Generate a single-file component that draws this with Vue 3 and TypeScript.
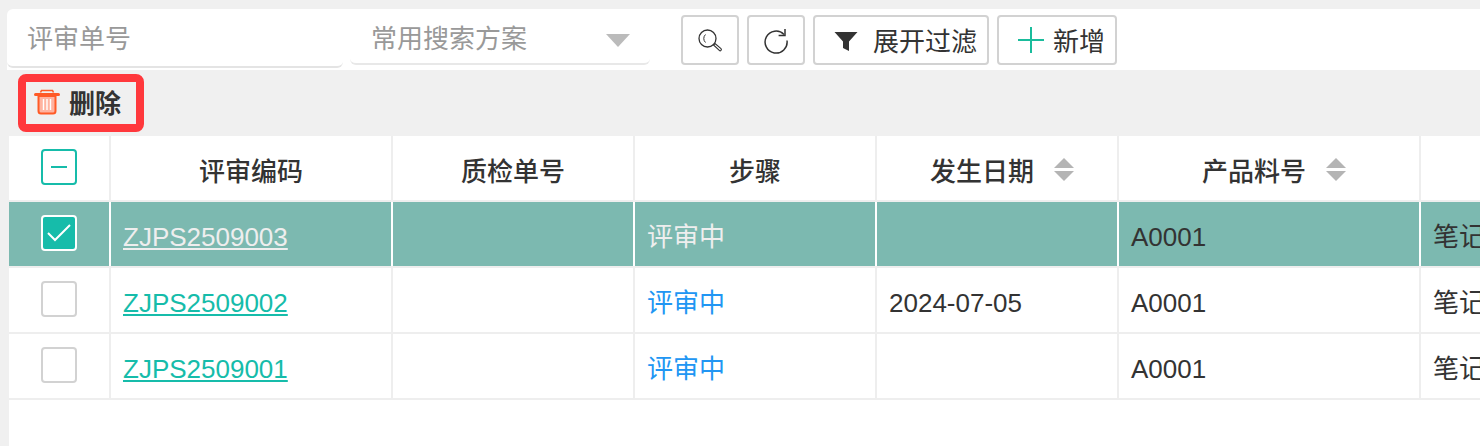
<script setup lang="ts">
interface Row {
  code: string
  step: string
  date: string
  part: string
  name: string
  state: 'checked' | 'empty'
}

const rows: Row[] = [
  { code: 'ZJPS2509003', step: '评审中', date: '', part: 'A0001', name: '笔记本', state: 'checked' },
  { code: 'ZJPS2509002', step: '评审中', date: '2024-07-05', part: 'A0001', name: '笔记本', state: 'empty' },
  { code: 'ZJPS2509001', step: '评审中', date: '', part: 'A0001', name: '笔记本', state: 'empty' },
]
</script>

<template>
  <div class="page">
    <div class="toolbar">
      <div class="search-input">评审单号</div>
      <div class="scheme-select">
        <span>常用搜索方案</span>
        <i class="caret"></i>
      </div>
      <div class="actions">
        <button type="button" class="btn btn-icon" aria-label="搜索">
          <svg width="28" height="28" viewBox="0 0 28 28" fill="none" stroke="#333" stroke-width="1.3">
            <circle cx="11.5" cy="12.5" r="8.5" />
            <path d="M9.5 8.5a5.5 5.5 0 0 0 0 8" stroke-width="1" />
            <path d="M17.5 19l1.5-1.5 6 5.2a1.1 1.1 0 0 1-1.7 1.7z" stroke-width="1.1" />
          </svg>
        </button>
        <button type="button" class="btn btn-icon" aria-label="刷新">
          <svg width="28" height="28" viewBox="0 0 28 28" fill="none" stroke="#333" stroke-width="1.5">
            <path d="M22 8.4A11 11 0 1 0 25 14.5" />
            <path d="M23 3v6.4h-6.4" />
          </svg>
        </button>
        <button type="button" class="btn btn-filter">
          <svg class="funnel" width="24" height="22" viewBox="0 0 24 22">
            <path d="M0.5 2h23L15 11.5V21l-6-3V11.5z" fill="#333" />
          </svg>
          <span class="btn-label">展开过滤</span>
        </button>
        <button type="button" class="btn btn-add">
          <svg width="28" height="28" viewBox="0 0 28 28" stroke="#1abc9c" stroke-width="2">
            <path d="M14 1v26M1 14h26" />
          </svg>
          <span class="btn-label">新增</span>
        </button>
      </div>
    </div>

    <div class="bulk-bar">
      <div class="delete-mark">
        <svg width="26" height="26" viewBox="0 0 26 26" fill="none">
          <path d="M1.500 5.500h23" stroke="#ff5a26" stroke-width="3" stroke-linecap="round" />
          <path d="M6.500 3.500l1-2h11l1 2" stroke="#ff5a26" stroke-width="1.6" />
          <path d="M4.500 7h17v15a2.500 2.500 0 0 1-2.500 2.500h-12a2.500 2.500 0 0 1-2.500-2.500z" fill="#ffb3a0" stroke="#ff5a26" stroke-width="2" />
          <path d="M9.500 10v11M13 10v11M16.500 10v11" stroke="#fff" stroke-width="1.400" />
        </svg>
        <span>删除</span>
      </div>
    </div>

    <div class="table-wrap">
      <div class="tr tr-head">
        <div class="td td-check">
          <span class="check check-half"><i></i></span>
        </div>
        <div class="td th">评审编码</div>
        <div class="td th">质检单号</div>
        <div class="td th">步骤</div>
        <div class="td th th-sort">发生日期<span class="sort"><i></i><i></i></span></div>
        <div class="td th th-sort">产品料号<span class="sort"><i></i><i></i></span></div>
        <div class="td th"></div>
      </div>
      <div
        v-for="row in rows"
        :key="row.code"
        class="tr"
        :class="{ 'tr-selected': row.state === 'checked' }"
      >
        <div class="td td-check">
          <span class="check" :class="{ 'check-on': row.state === 'checked' }">
            <svg v-if="row.state === 'checked'" width="32" height="32" viewBox="0 0 32 32" fill="none" stroke="#fff" stroke-width="2">
              <path d="M5 16l7 7L27 8" />
            </svg>
          </span>
        </div>
        <div class="td"><a class="code-link">{{ row.code }}</a></div>
        <div class="td"></div>
        <div class="td td-cjk step">{{ row.step }}</div>
        <div class="td">{{ row.date }}</div>
        <div class="td">{{ row.part }}</div>
        <div class="td td-cjk">{{ row.name }}</div>
      </div>
    </div>
  </div>
</template>

<style scoped>
.page {
  display: flex;
  flex-direction: column;
  width: 1480px;
  height: 446px;
  padding-top: 9px;
  box-sizing: border-box;
  overflow: hidden;
  background: #f0f0f0;
  font-family: "Liberation Sans", "Noto Sans CJK SC", sans-serif;
  color: #333;
}

/* top search bar */
.toolbar {
  display: flex;
  align-items: flex-start;
  height: 61px;
  margin-left: 7px;
  background: #fff;
  border-radius: 6px 0 0 0;
  flex: none;
}

.search-input {
  width: 336px;
  height: 59px;
  padding: 15px 0 0 20px;
  box-sizing: border-box;
  font-size: 26px;
  line-height: 30px;
  color: #999;
  border-bottom: 2px solid #e4e4e4;
  border-radius: 0 0 6px 6px;
  flex: none;
}

.scheme-select {
  display: flex;
  justify-content: space-between;
  width: 300px;
  height: 56px;
  margin-left: 7px;
  padding: 15px 20px 0 21px;
  box-sizing: border-box;
  font-size: 26px;
  line-height: 30px;
  color: #999;
  border-bottom: 2px solid #e8e8e8;
  border-radius: 0 0 6px 6px;
  flex: none;
}

.caret {
  width: 0;
  height: 0;
  margin-top: 10px;
  border-left: 12px solid transparent;
  border-right: 12px solid transparent;
  border-top: 13px solid #bbb;
}

.actions {
  display: flex;
  gap: 8px;
  margin: 6px 0 0 31px;
}

.btn {
  display: flex;
  align-items: center;
  height: 50px;
  padding: 0;
  background: #fff;
  border: 2px solid #d2d2d2;
  border-radius: 4px;
  box-sizing: border-box;
  font-family: inherit;
  font-size: 26px;
  color: #333;
}

.btn-icon {
  justify-content: center;
  width: 58px;
}

.btn-filter {
  width: 176px;
  padding-left: 19px;
  gap: 15px;
}

.btn-add {
  width: 120px;
  padding-left: 18px;
  gap: 8px;
}

.btn-label {
  padding-bottom: 2px;
}

.funnel {
  margin-top: 2px;
}

/* bulk actions */
.bulk-bar {
  height: 66px;
  padding-left: 18px;
  flex: none;
}

.delete-mark {
  display: flex;
  align-items: center;
  gap: 9px;
  width: 126px;
  height: 58px;
  margin-top: 4px;
  padding: 0 0 4px 8px;
  box-sizing: border-box;
  border: 8px solid #ff383c;
  border-radius: 8px;
  font-size: 26px;
  font-weight: 700;
  color: #333;
}

.delete-mark svg {
  margin-top: 2px;
}

/* table */
.table-wrap {
  flex: 1;
  margin-left: 9px;
  background: #fff;
}

.tr {
  display: grid;
  grid-template-columns: 102px 282px 242px 242px 242px 302px 1fr;
  height: 66px;
  border-bottom: 2px solid #eee;
  box-sizing: border-box;
}

.td {
  display: flex;
  align-items: center;
  padding: 7px 12px 0;
  box-sizing: border-box;
  border-right: 2px solid #eee;
  font-size: 26px;
  white-space: nowrap;
  overflow: hidden;
}

.td:last-child {
  border-right: none;
}

.td-cjk {
  padding-top: 1px;
}

.th {
  justify-content: center;
  padding: 2px 0 0;
  font-weight: 500;
}

.th-sort {
  padding-left: 10px;
}

.td-check {
  justify-content: center;
  padding: 0 0 2px;
}

.tr-selected {
  background: #7cb9b0;
}

.tr-selected .step,
.tr-selected .code-link {
  color: #eee;
}

.tr-selected .td {
  border-right-color: #fff;
}

.step {
  color: #2196f3;
}

.code-link {
  color: #16bcaa;
  text-decoration: underline;
}

.check {
  display: flex;
  align-items: center;
  justify-content: center;
  width: 36px;
  height: 36px;
  box-sizing: border-box;
  background: #fff;
  border: 2px solid #d2d2d2;
  border-radius: 4px;
}

.check-half {
  border-color: #16bcaa;
}

.check-half i {
  width: 16px;
  height: 2px;
  background: #16bcaa;
}

.check-on {
  background: #16bcaa;
  border-color: #fff;
}

.sort {
  display: flex;
  flex-direction: column;
  gap: 3px;
  margin-left: 20px;
}

.sort i {
  width: 0;
  height: 0;
  border-left: 10px solid transparent;
  border-right: 10px solid transparent;
  border-bottom: 10px solid #b4b4b4;
}

.sort i:last-child {
  border-bottom: none;
  border-top: 10px solid #b4b4b4;
}
</style>

<style>
html,
body {
  margin: 0;
  overflow: hidden;
}
</style>
